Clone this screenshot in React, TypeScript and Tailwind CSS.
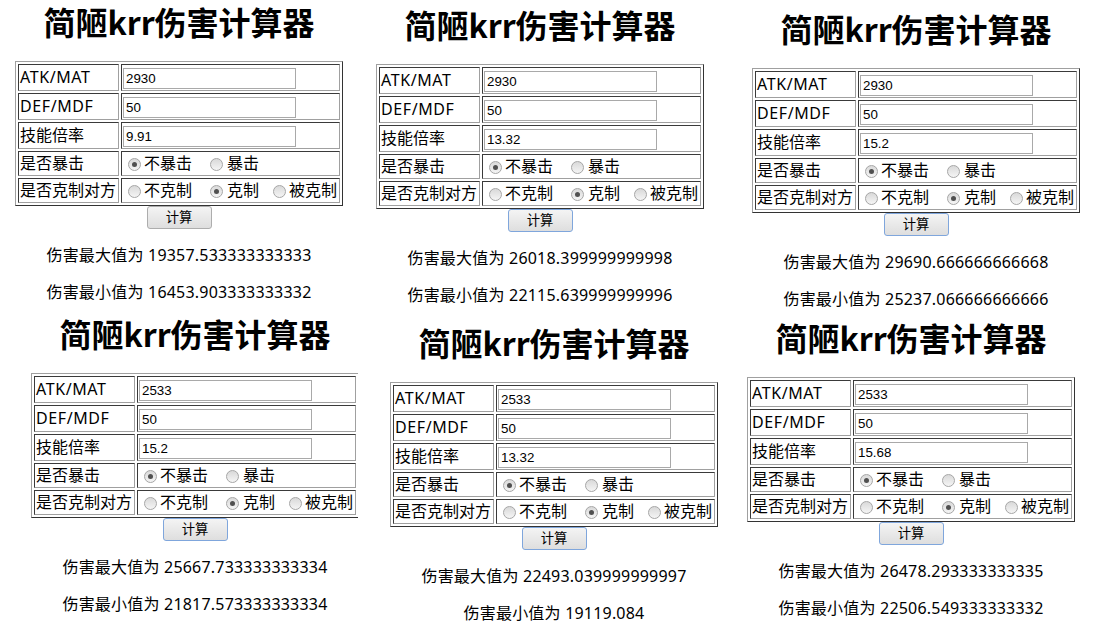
import React from "react";

type P = {
  pl: string;
  pt: string;
  atk: string;
  def: string;
  rate: string;
  max: string;
  min: string;
  blue: boolean;
  clip?: boolean;
};

const cellCls =
  "border border-t-[#3a3a3a] border-l-[#3a3a3a] border-r-[#a0a0a0] border-b-[#a0a0a0] p-[1px] flex items-center leading-[21px]";

function Radio({ checked }: { checked?: boolean }) {
  return (
    <span className="w-[13px] h-[13px] rounded-full border border-[#a6a6a6] bg-linear-to-b from-[#d9d9d9] to-[#f5f5f5] flex items-center justify-center shrink-0 mt-[2px]">
      {checked ? <span className="w-[5px] h-[5px] rounded-full bg-[#505050]" /> : null}
    </span>
  );
}

function Input({ v }: { v: string }) {
  return (
    <input
      defaultValue={v}
      className="w-[173px] h-[21px] border border-[#a9a9a9] px-[2px] text-[13.33px] text-black font-['Liberation_Sans',Arial,sans-serif] outline-none bg-white mt-[2px]"
    />
  );
}

function Panel(p: P) {
  return (
    <div className={p.pl + " " + p.pt + (p.clip ? " w-[358px] overflow-hidden" : "")}>
      <div className="w-[328px] flex flex-col items-center text-black font-['Noto_Sans','Noto_Sans_CJK_SC',sans-serif]">
        <div className="h-[40px] leading-[40px] text-[32px] font-bold whitespace-nowrap font-['Noto_Sans_CJK_SC',sans-serif]">
          简陋krr伤害计算器
        </div>
        <div className="mt-[20px] w-[328px] h-[145px] border border-t-[#a0a0a0] border-l-[#a0a0a0] border-r-[#333] border-b-[#333] p-[2px] grid grid-cols-[101px_219px] grid-rows-[27px_27px_27px_25px_25px] gap-[2px] text-[16px]">
          <div className={cellCls + " tracking-[0.6px]"}>ATK/MAT</div>
          <div className={cellCls}>
            <Input v={p.atk} />
          </div>
          <div className={cellCls + " tracking-[0.6px]"}>DEF/MDF</div>
          <div className={cellCls}>
            <Input v={p.def} />
          </div>
          <div className={cellCls}>技能倍率</div>
          <div className={cellCls}>
            <Input v={p.rate} />
          </div>
          <div className={cellCls}>是否暴击</div>
          <div className={cellCls}>
            <span className="ml-[5px]">
              <Radio checked />
            </span>
            <span className="ml-[3px]">不暴击</span>
            <span className="ml-[18px]">
              <Radio />
            </span>
            <span className="ml-[4px]">暴击</span>
          </div>
          <div className={cellCls + " whitespace-nowrap"}>是否克制对方</div>
          <div className={cellCls + " whitespace-nowrap"}>
            <span className="ml-[5px]">
              <Radio />
            </span>
            <span className="ml-[3px]">不克制</span>
            <span className="ml-[18px]">
              <Radio checked />
            </span>
            <span className="ml-[4px]">克制</span>
            <span className="ml-[14px]">
              <Radio />
            </span>
            <span className="ml-[3px]">被克制</span>
          </div>
        </div>
        <button
          className={
            "w-[65px] h-[23px] border rounded-[3px] bg-linear-to-b from-[#f4f4f4] to-[#dedede] text-[13.33px] leading-[21px] text-black " +
            (p.blue ? "border-[#7fa6dc]" : "border-[#adadad]")
          }
        >
          计算
        </button>
        <div className="mt-[16px] leading-[21px] text-[16px] tracking-[0.2px] whitespace-nowrap">伤害最大值为 {p.max}</div>
        <div className="mt-[16px] leading-[21px] text-[16px] tracking-[0.2px] whitespace-nowrap">伤害最小值为 {p.min}</div>
      </div>
    </div>
  );
}

export default function App() {
  return (
    <div className="w-[1117px] h-[623px] bg-white overflow-hidden grid grid-cols-[370px_370px_377px] grid-rows-[310px_313px]">
      <Panel pl="pl-[15px]" pt="pt-[1px]" atk="2930" def="50" rate="9.91" max="19357.533333333333" min="16453.903333333332" blue={false} />
      <Panel pl="pl-[6px]" pt="pt-[4px]" atk="2930" def="50" rate="13.32" max="26018.399999999998" min="22115.639999999996" blue />
      <Panel pl="pl-[12px]" pt="pt-[8px]" atk="2930" def="50" rate="15.2" max="29690.666666666668" min="25237.066666666666" blue />
      <Panel pl="pl-[31px]" pt="pt-[3px]" atk="2533" def="50" rate="15.2" max="25667.733333333334" min="21817.573333333334" blue clip />
      <Panel pl="pl-[20px]" pt="pt-[12px]" atk="2533" def="50" rate="13.32" max="22493.039999999997" min="19119.084" blue />
      <Panel pl="pl-[7px]" pt="pt-[7px]" atk="2533" def="50" rate="15.68" max="26478.293333333335" min="22506.549333333332" blue />
    </div>
  );
}
